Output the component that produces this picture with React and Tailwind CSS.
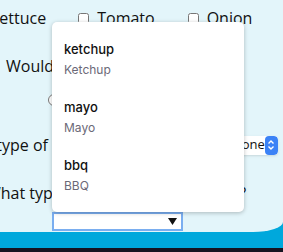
export default function App() {
    const options = [
        { value: 'ketchup', label: 'Ketchup' },
        { value: 'mayo', label: 'Mayo' },
        { value: 'bbq', label: 'BBQ' },
    ];

    return (
        <div className="relative w-[283px] h-[252px] overflow-hidden bg-[#161320] font-['Open_Sans',sans-serif] text-[#111]">
            <div className="h-[248px] bg-[#00a8dc] flex flex-col">
                <div className="h-[232px] bg-[#e3f5fa] rounded-br-[30px_10px] text-[16px]">
                    {/* toppings */}
                    <div className="flex items-center h-[20px] mt-[8px] -ml-[9px]">
                        <span>Lettuce</span>
                        <input type="checkbox" className="ml-[32px] w-[11px] h-[11px]" />
                        <span className="ml-[8px]">Tomato</span>
                        <input type="checkbox" className="ml-[33px] w-[11px] h-[11px]" />
                        <span className="ml-[8px]">Onion</span>
                    </div>

                    <div className="ml-[6px] mt-[28px] h-[20px] flex items-center whitespace-nowrap">
                        Would you like cheese?
                    </div>

                    <div className="ml-[48px] mt-[17px] h-[14px] flex items-center">
                        <input type="radio" className="w-[12px] h-[12px]" />
                    </div>

                    <div className="mt-[28px] h-[20px] flex items-center justify-between pr-[5px] whitespace-nowrap">
                        <span className="-ml-[47px]">What type of bread?</span>
                        <div className="flex items-center h-[19px] w-[48px] bg-white rounded-[4px] shadow-sm text-[13px] overflow-hidden">
                            <span className="flex-1 pl-[2px]">None</span>
                            <span className="w-[16px] h-full bg-[#3b82f6] rounded-[4px] flex items-center justify-center">
                                <svg width="8" height="12" viewBox="0 0 8 12" fill="none" stroke="white" strokeWidth="1.4">
                                    <path d="M1.5 4.5 L4 2 L6.5 4.5" />
                                    <path d="M1.5 7.5 L4 10 L6.5 7.5" />
                                </svg>
                            </span>
                        </div>
                    </div>

                    <div className="mt-[28px] h-[20px] flex items-center -ml-[14px] whitespace-nowrap">
                        <span>What type of sauce would you like?</span>
                    </div>

                    <div className="ml-[52px] mt-[9px] w-[131px] h-[19px] bg-white border-2 border-[#7aaef0] flex items-center justify-end pr-[4px]">
                        <svg width="9" height="7" viewBox="0 0 9 7">
                            <path d="M0 0 H9 L4.5 7 Z" fill="#111" />
                        </svg>
                    </div>
                </div>
            </div>

            {/* open dropdown menu */}
            <div className="absolute left-[52px] top-[22px] w-[192px] h-[190px] bg-white rounded-[5px] shadow-[0_1px_4px_rgba(0,0,0,0.25)] font-['Inter',sans-serif] pt-[18px] pl-[12px]">
                {options.map((o) => (
                    <div key={o.value} className="h-[58px]">
                        <div className="text-[13px] font-medium text-[#111] leading-[18px]">{o.value}</div>
                        <div className="mt-[4px] text-[12px] text-[#6b6977] leading-[16px]">{o.label}</div>
                    </div>
                ))}
            </div>
        </div>
    );
}
